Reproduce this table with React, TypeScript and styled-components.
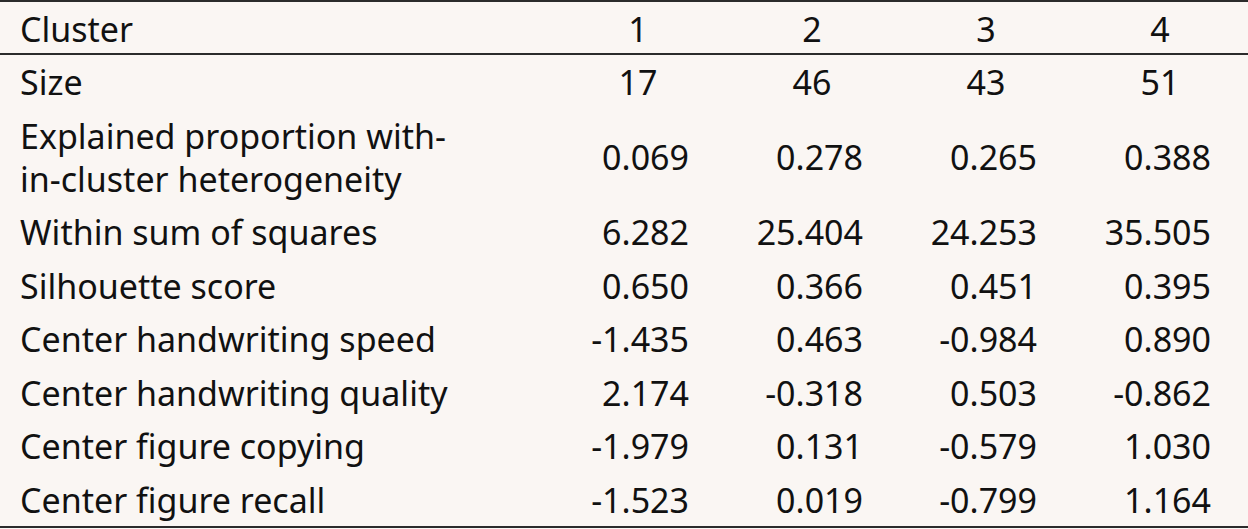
import React from 'react';
import styled, { createGlobalStyle } from 'styled-components';

const GlobalStyle = createGlobalStyle`
  html, body {
    margin: 0;
    padding: 0;
    background: #faf6f3;
  }
`;

const Table = styled.div`
  width: 1248px;
  border-top: 2px solid #2b2b2b;
  border-bottom: 2px solid #2b2b2b;
  background: #faf6f3;
  color: #111;
  font-family: 'Noto Sans', 'Open Sans', sans-serif;
  font-size: 34px;
  line-height: 43px;
`;

const Row = styled.div<{ $head?: boolean }>`
  display: grid;
  grid-template-columns: 515px repeat(4, 174px) 1fr;
  align-items: center;
  padding: ${p => (p.$head ? '6px 0 2px' : '6px 0 4.5px')};
  border-bottom: ${p => (p.$head ? '2px solid #2b2b2b' : 'none')};
`;

const Label = styled.div`
  padding-left: 20px;
  white-space: nowrap;
`;

const Value = styled.div<{ $align: 'center' | 'right' }>`
  padding-left: ${p => (p.$align === 'center' ? '72px' : '0')};
  text-align: ${p => p.$align};
  white-space: nowrap;
`;

type Line = {
  label: React.ReactNode;
  values: string[];
  align: 'center' | 'right';
};

const header: Line = { label: 'Cluster', values: ['1', '2', '3', '4'], align: 'center' };

const rows: Line[] = [
  { label: 'Size', values: ['17', '46', '43', '51'], align: 'center' },
  {
    label: (
      <>
        Explained proportion with-
        <br />
        in-cluster heterogeneity
      </>
    ),
    values: ['0.069', '0.278', '0.265', '0.388'],
    align: 'right',
  },
  { label: 'Within sum of squares', values: ['6.282', '25.404', '24.253', '35.505'], align: 'right' },
  { label: 'Silhouette score', values: ['0.650', '0.366', '0.451', '0.395'], align: 'right' },
  { label: 'Center handwriting speed', values: ['-1.435', '0.463', '-0.984', '0.890'], align: 'right' },
  { label: 'Center handwriting quality', values: ['2.174', '-0.318', '0.503', '-0.862'], align: 'right' },
  { label: 'Center figure copying', values: ['-1.979', '0.131', '-0.579', '1.030'], align: 'right' },
  { label: 'Center figure recall', values: ['-1.523', '0.019', '-0.799', '1.164'], align: 'right' },
];

const TableRow: React.FC<{ line: Line; head?: boolean }> = ({ line, head }) => (
  <Row $head={head}>
    <Label>{line.label}</Label>
    {line.values.map((v, i) => (
      <Value key={i} $align={line.align}>
        {v}
      </Value>
    ))}
  </Row>
);

const App: React.FC = () => (
  <>
    <GlobalStyle />
    <Table>
      <TableRow line={header} head />
      {rows.map((r, i) => (
        <TableRow key={i} line={r} />
      ))}
    </Table>
  </>
);

export default App;
